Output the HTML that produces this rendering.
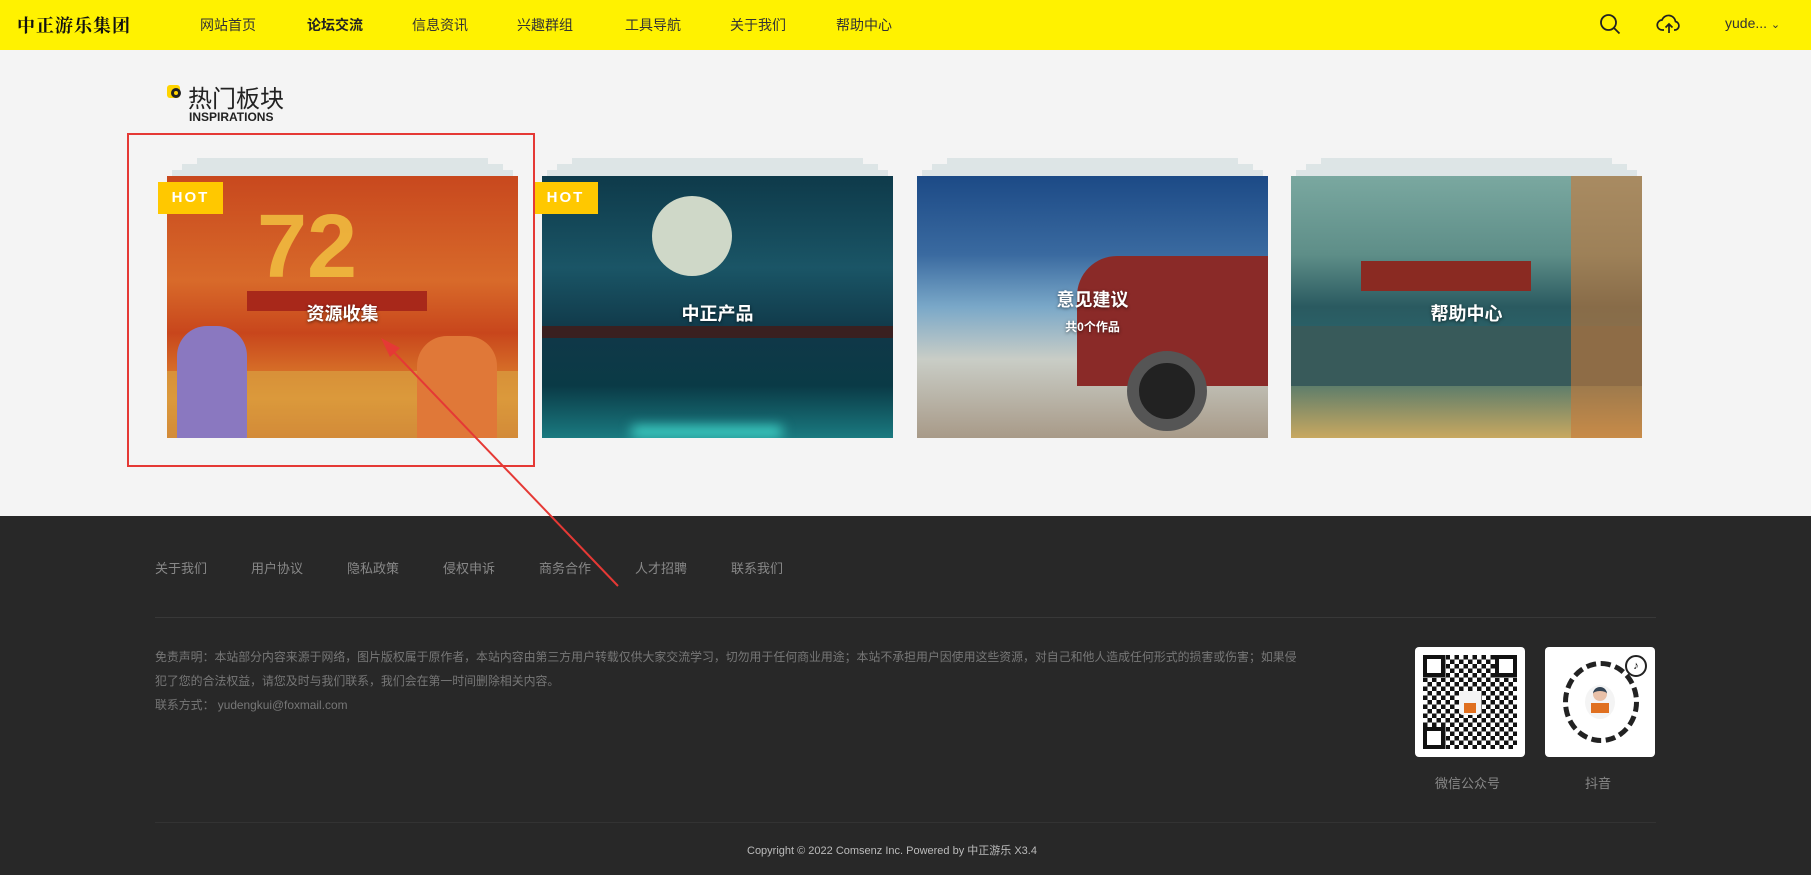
<!DOCTYPE html>
<html><head><meta charset="utf-8"><style>
*{margin:0;padding:0;box-sizing:border-box}
body{width:1811px;height:875px;background:#f4f4f4;font-family:"Liberation Sans","Noto Sans CJK SC",sans-serif;position:relative;overflow:hidden}
.hd{position:absolute;left:0;top:0;width:1811px;height:50px;background:#fff200}
.abs{position:absolute;white-space:nowrap}
.nav{top:15px;font-size:14px;color:#333}
.card{position:absolute;top:176px;width:351px;height:262px;overflow:hidden}
.stk{position:absolute;top:158px;width:351px;height:18px}
.stk div{position:absolute;background:#dde5e6;height:6px}
.ct{position:absolute;left:0;right:0;text-align:center;color:#fff;font-weight:bold;font-size:18px;text-shadow:0 1px 3px rgba(0,0,0,.6)}
.hot{position:absolute;width:65px;height:32px;background:#ffc800;color:#fff;font-weight:bold;font-size:15px;letter-spacing:2px;text-align:center;line-height:32px}
.ft{position:absolute;left:0;top:516px;width:1811px;height:359px;background:#282828}
.fl{top:558px;font-size:13px;color:#888}
.dis{font-size:11.9px;color:#777;line-height:24px}
</style></head><body>
<div class="hd"></div>
<div class="abs" style="left:17px;top:12px;font-size:18px;font-weight:bold;color:#111;font-family:'Noto Serif CJK SC',serif;letter-spacing:1px">中正游乐集团</div>
<div class="abs nav" style="left:200px">网站首页</div>
<div class="abs nav" style="left:307px;font-weight:bold;color:#222">论坛交流</div>
<div class="abs nav" style="left:412px">信息资讯</div>
<div class="abs nav" style="left:517px">兴趣群组</div>
<div class="abs nav" style="left:625px">工具导航</div>
<div class="abs nav" style="left:730px">关于我们</div>
<div class="abs nav" style="left:836px">帮助中心</div>
<svg class="abs" style="left:1598px;top:12px" width="24" height="24" viewBox="0 0 24 24" fill="none" stroke="#222" stroke-width="1.8"><circle cx="10.5" cy="10.5" r="7.5"/><path d="M16 16l5.5 5.5"/></svg>
<svg class="abs" style="left:1656px;top:11px" width="26" height="26" viewBox="0 0 26 26" fill="none" stroke="#222" stroke-width="1.7"><path d="M8 19H6.5a5 5 0 0 1-.5-10 7 7 0 0 1 13.5 1.5A4.3 4.3 0 0 1 19 19h-1"/><path d="M13 22v-9M9.5 16.5L13 13l3.5 3.5"/></svg>
<div class="abs" style="left:1725px;top:15px;font-size:14px;color:#333">yude... <span style="font-size:11px">&#8964;</span></div>

<div class="abs" style="left:167px;top:85px;width:13px;height:13px;background:#ffd400;border-radius:3px"></div>
<div class="abs" style="left:171px;top:88px;width:10px;height:10px;background:#222;border-radius:50%;border:2px solid #222"><div style="width:4px;height:4px;background:#ffd400;border-radius:50%;margin:1px"></div></div>
<div class="abs" style="left:188px;top:79px;font-size:24px;color:#222">热门板块</div>
<div class="abs" style="left:189px;top:110px;font-size:12px;font-weight:bold;color:#222">INSPIRATIONS</div>

<div class="stk" style="left:167px"><div style="left:30px;right:30px;top:0"></div><div style="left:15px;right:15px;top:6px"></div><div style="left:5px;right:5px;top:12px"></div></div>
<div class="stk" style="left:542px"><div style="left:30px;right:30px;top:0"></div><div style="left:15px;right:15px;top:6px"></div><div style="left:5px;right:5px;top:12px"></div></div>
<div class="stk" style="left:917px"><div style="left:30px;right:30px;top:0"></div><div style="left:15px;right:15px;top:6px"></div><div style="left:5px;right:5px;top:12px"></div></div>
<div class="stk" style="left:1291px"><div style="left:30px;right:30px;top:0"></div><div style="left:15px;right:15px;top:6px"></div><div style="left:5px;right:5px;top:12px"></div></div>

<div class="card" style="left:167px;background:linear-gradient(180deg,#c8481e 0%,#d86a2a 40%,#c8461c 60%,#e08a30 85%,#c55a28 100%)">
<div style="position:absolute;left:90px;top:20px;font-size:90px;font-weight:bold;color:#f2c040;opacity:.85">72</div>
<div style="position:absolute;left:80px;top:115px;width:180px;height:20px;background:#a8281a"></div>
<div style="position:absolute;left:0;top:195px;width:351px;height:67px;background:#d8a040;opacity:.7"></div>
<div style="position:absolute;left:10px;top:150px;width:70px;height:112px;background:#8a78c0;border-radius:30px 30px 0 0"></div>
<div style="position:absolute;left:250px;top:160px;width:80px;height:102px;background:#e07838;border-radius:30px 30px 0 0"></div>
<div class="ct" style="top:124px">资源收集</div></div>
<div class="card" style="left:542px;background:linear-gradient(180deg,#0e3a4a 0%,#1a5566 35%,#103848 60%,#0a3a46 80%,#1a7a80 100%)">
<div style="position:absolute;left:110px;top:20px;width:80px;height:80px;border-radius:50%;background:#cfd8c8"></div>
<div style="position:absolute;left:0;top:150px;width:351px;height:12px;background:#3a2020"></div>
<div style="position:absolute;left:90px;top:250px;width:150px;height:12px;background:#3fd4c8;filter:blur(6px)"></div>
<div class="ct" style="top:124px">中正产品</div></div>
<div class="card" style="left:917px;background:linear-gradient(180deg,#1c4a86 0%,#3a6aa0 30%,#7aa8c8 50%,#c9cdc6 70%,#a89a88 100%)">
<div style="position:absolute;left:160px;top:80px;width:200px;height:130px;background:#8a2a28;border-radius:40px 10px 0 0"></div>
<div style="position:absolute;left:210px;top:175px;width:80px;height:80px;border-radius:50%;background:#222;border:12px solid #555"></div>
<div class="ct" style="top:110px">意见建议</div>
<div class="ct" style="top:142px;font-size:12px">共0个作品</div></div>
<div class="card" style="left:1291px;background:linear-gradient(180deg,#7aa8a0 0%,#5e8e88 30%,#2a5a60 50%,#2a6870 70%,#c8a860 100%)">
<div style="position:absolute;left:70px;top:85px;width:170px;height:30px;background:#8a2a22"></div>
<div style="position:absolute;left:0;top:150px;width:351px;height:60px;background:#385a5a"></div>
<div style="position:absolute;left:280px;top:0;width:71px;height:262px;background:#c87838;opacity:.6"></div>
<div class="ct" style="top:124px">帮助中心</div></div>
<div class="hot" style="left:158px;top:182px">HOT</div>
<div class="hot" style="left:533px;top:182px">HOT</div>

<div class="abs" style="left:127px;top:133px;width:408px;height:334px;border:2px solid #e53935"></div>

<div class="ft"></div>
<div class="abs fl" style="left:155px">关于我们</div>
<div class="abs fl" style="left:251px">用户协议</div>
<div class="abs fl" style="left:347px">隐私政策</div>
<div class="abs fl" style="left:443px">侵权申诉</div>
<div class="abs fl" style="left:539px">商务合作</div>
<div class="abs fl" style="left:635px">人才招聘</div>
<div class="abs fl" style="left:731px">联系我们</div>
<div class="abs" style="left:155px;top:617px;width:1501px;height:1px;background:#383838"></div>
<div class="abs dis" style="left:155px;top:645px">免责声明：本站部分内容来源于网络，图片版权属于原作者，本站内容由第三方用户转载仅供大家交流学习，切勿用于任何商业用途；本站不承担用户因使用这些资源，对自己和他人造成任何形式的损害或伤害；如果侵<br>犯了您的合法权益，请您及时与我们联系，我们会在第一时间删除相关内容。<br>联系方式： yudengkui@foxmail.com</div>
<div class="abs" style="left:1415px;top:647px;width:110px;height:110px;background:#fff;border-radius:4px;padding:8px">
<div style="width:94px;height:94px;background:repeating-conic-gradient(#111 0 25%,#fff 0 50%) 0 0/9px 9px;position:relative">
<div style="position:absolute;left:0;top:0;width:22px;height:22px;border:4px solid #111;background:#fff"></div>
<div style="position:absolute;right:0;top:0;width:22px;height:22px;border:4px solid #111;background:#fff"></div>
<div style="position:absolute;left:0;bottom:0;width:22px;height:22px;border:4px solid #111;background:#fff"></div>
<div style="position:absolute;left:36px;top:36px;width:22px;height:24px;background:#f4f4f4;border-radius:4px"><div style="width:12px;height:10px;background:#e07020;margin:12px auto 0"></div></div></div></div>
<div class="abs" style="left:1545px;top:647px;width:110px;height:110px;background:#fff;border-radius:4px">
<div style="position:absolute;left:18px;top:14px;width:76px;height:82px;border-radius:50%;border:5px dashed #222"></div>
<div style="position:absolute;left:40px;top:38px;width:30px;height:34px;border-radius:50%;background:#f4f4f4"><div style="width:14px;height:14px;background:#e8c0a8;border-radius:50%;margin:2px auto 0;border-top:4px solid #345"></div><div style="width:18px;height:10px;background:#e07020;margin:2px auto 0"></div></div>
<div style="position:absolute;right:8px;top:8px;width:22px;height:22px;border-radius:50%;border:2px solid #222;font-size:11px;text-align:center;line-height:18px">♪</div></div>
<div class="abs" style="left:1435px;top:773px;font-size:13px;color:#888">微信公众号</div>
<div class="abs" style="left:1585px;top:773px;font-size:13px;color:#888">抖音</div>
<div class="abs" style="left:155px;top:822px;width:1501px;height:1px;background:#333"></div>
<div class="abs" style="left:747px;top:842px;font-size:11px;color:#bbb">Copyright © 2022 Comsenz Inc. Powered by 中正游乐 X3.4</div>
<svg class="abs" style="left:0;top:0" width="1811" height="875"><line x1="618" y1="586" x2="388" y2="346" stroke="#e53935" stroke-width="2"/><path d="M381 338 L400 348 L390 357 Z" fill="#e53935"/></svg>
</body></html>
